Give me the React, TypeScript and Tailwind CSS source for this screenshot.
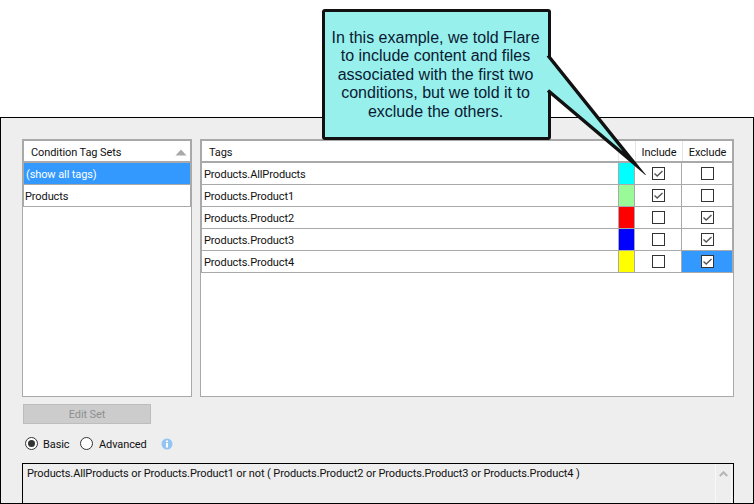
import { ReactNode } from 'react';

const tags = [
  { name: 'Products.AllProducts', color: 'bg-[#00ffff]', include: true, exclude: false },
  { name: 'Products.Product1', color: 'bg-[#98fb98]', include: true, exclude: false },
  { name: 'Products.Product2', color: 'bg-[#ff0000]', include: false, exclude: true },
  { name: 'Products.Product3', color: 'bg-[#0000ff]', include: false, exclude: true },
  { name: 'Products.Product4', color: 'bg-[#ffff00]', include: false, exclude: true, selected: true },
];

function Check({ on }: { on: boolean }) {
  return (
    <span className="w-[13px] h-[13px] border border-[#333333] bg-white flex items-center justify-center">
      {on && (
        <svg width="11" height="11" viewBox="0 0 11 11" fill="none">
          <path d="M1.5 5.5 L4.2 8 L9.5 3" stroke="#555555" strokeWidth="1.4" />
        </svg>
      )}
    </span>
  );
}

function Radio({ on, className, children }: { on?: boolean; className: string; children: ReactNode }) {
  return (
    <label className={`flex items-center gap-[5px] ${className}`}>
      <span className="w-[13px] h-[13px] rounded-full border border-[#333333] bg-white flex items-center justify-center">
        {on && <span className="w-[7px] h-[7px] rounded-full bg-[#333333]" />}
      </span>
      <span className="pt-[1px]">{children}</span>
    </label>
  );
}

export default function App() {
  return (
    <div className="relative w-[754px] h-[504px] overflow-hidden bg-white text-[11px] tracking-[-0.1px] leading-none text-[#111111] font-['Roboto',sans-serif]">
      <div className="h-[117px]" />

      <div className="h-[387px] border border-black bg-[#eeeeee] pl-[21px] pr-[19px] pt-[21px] overflow-hidden">
        <div className="flex gap-2 h-[258px]">
          {/* Condition tag sets */}
          <div className="w-[170px] border border-[#a9a9a9] bg-white">
            <div className="h-[23px] border-[#a9a9a9] border-x border-t border-b-2 flex items-center justify-between pl-[7px] pr-[2px] pt-[2px]">
              <span>Condition Tag Sets</span>
              <svg width="12" height="7" viewBox="0 0 12 7" className="mr-[1px]"><path d="M6 0.5 L11.5 6.5 H0.5 Z" fill="#a9a9a9" /></svg>
            </div>
            <div className="h-[22px] bg-[#3399ff] text-white border-x border-b border-[#a9a9a9] flex items-center pl-[2px] pt-[1px]">(show all tags)</div>
            <div className="h-[22px] border-x border-b border-[#a9a9a9] flex items-center pl-[1px] pt-[1px]">Products</div>
          </div>

          {/* Tags table */}
          <div className="w-[534px] border border-[#a9a9a9] bg-white">
            <div className="h-[23px] border-x border-t border-b-2 border-[#a9a9a9] flex items-center">
              <span className="w-[416px] pl-[7px] pt-[2px]">Tags</span>
              <span className="w-[17px] h-full border-l border-[#e4e4e4]" />
              <span className="w-[47px] h-full border-l border-[#e4e4e4] flex items-center justify-center pt-[2px]">Include</span>
              <span className="w-[50px] h-full border-l border-[#e4e4e4] flex items-center justify-center pt-[2px]">Exclude</span>
            </div>
            {tags.map((t) => (
              <div key={t.name} className="h-[22px] border-x border-b border-[#a9a9a9] flex">
                <span className="w-[416px] flex items-center pl-[2px] pt-[1px]">{t.name}</span>
                <span className={`w-[17px] border-x border-[#a9a9a9] ${t.color}`} />
                <span className="w-[47px] flex items-center justify-center border-r border-[#a9a9a9]">
                  <Check on={t.include} />
                </span>
                <span className={`w-[50px] flex items-center justify-center ${t.selected ? 'bg-[#3399ff]' : ''}`}>
                  <Check on={t.exclude} />
                </span>
              </div>
            ))}
          </div>
        </div>

        <button className="block mt-[7px] ml-[1px] w-[128px] h-[20px] bg-[#cccccc] border border-[#bdbdbd] text-[#8f8f8f] text-[11px]">Edit Set</button>

        <div className="flex items-center mt-[13px] ml-[3px] h-[13px]">
          <Radio on className="w-[55px]">Basic</Radio>
          <Radio className="w-[81px]"><span className="ml-[1px]">Advanced</span></Radio>
          <svg width="12" height="12" viewBox="0 0 12 12">
            <circle cx="6" cy="6" r="5.5" fill="#93c5f3" />
            <rect x="5" y="5" width="2" height="4.5" fill="#ffffff" />
            <rect x="5" y="2.5" width="2" height="1.6" fill="#ffffff" />
          </svg>
        </div>

        <div className="mt-[13px] w-[712px] h-[60px] border border-black flex justify-between">
          <span className="pl-[4px] pt-[4px]">Products.AllProducts or Products.Product1 or not ( Products.Product2 or Products.Product3 or Products.Product4 )</span>
          <span className="w-[17px] mr-[1px] border-x border-[#f8f8f8] flex justify-center pt-[7px]">
            <svg width="9" height="6" viewBox="0 0 9 6"><path d="M0.8 5 L4.5 1.2 L8.2 5" fill="none" stroke="#b5b5b5" strokeWidth="2" /></svg>
          </span>
        </div>
      </div>

      {/* Callout */}
      <div className="absolute left-[322px] top-[9px] w-[229px] h-[131px] bg-[#97f0ec] border-[3px] border-[#111111] rounded-[3px] flex items-center justify-center text-center font-['Liberation_Sans',sans-serif] text-[16px] tracking-normal leading-[18.5px] text-[#0b1a33] pt-[1px] pr-[2px]">
        <p>
          In this example, we told Flare<br />
          to include content and files<br />
          associated with the first two<br />
          conditions, but we told it to<br />
          exclude the others.
        </p>
      </div>
      <svg className="absolute left-[540px] top-[45px]" width="110" height="130" viewBox="0 0 110 130">
        <path d="M8 10.5 L95 119 L8 45.5" fill="#97f0ec" stroke="#111111" strokeWidth="3.5" strokeMiterlimit="20" />
      </svg>
    </div>
  );
}
